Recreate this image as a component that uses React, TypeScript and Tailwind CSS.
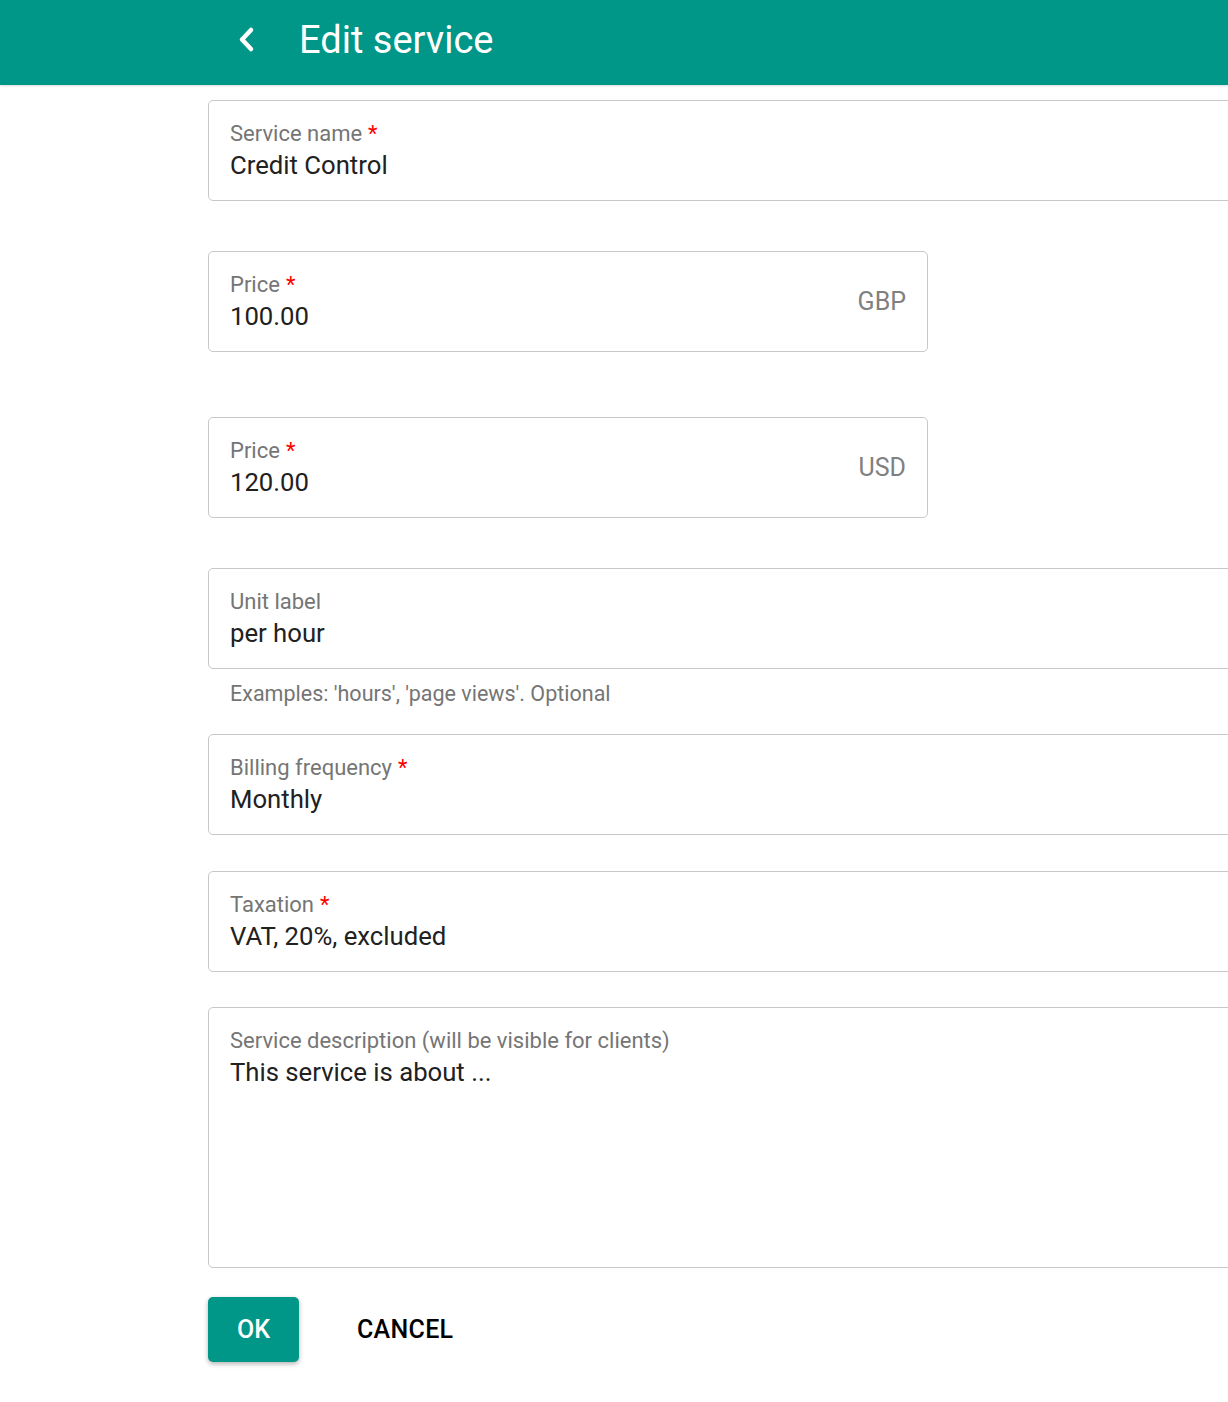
import React from "react";

type FieldProps = {
  label: string;
  value: string;
  required?: boolean;
  suffix?: string;
  narrow?: boolean;
};

const Field: React.FC<FieldProps> = ({ label, value, required, suffix, narrow }) => (
  <div
    className={`flex h-[101px] items-center rounded-[5px] border border-[#c8c8c8] bg-white pl-[21px] pr-[21px] ${
      narrow ? "w-[720px]" : "w-[1060px]"
    }`}
  >
    <div className="flex flex-1 flex-col">
      <div className="text-[22px] leading-[26px] text-[#757575]">
        {label}
        {required && <span className="ml-[6px] text-[#ff0000]">*</span>}
      </div>
      <div className="mt-[2px] text-[25.7px] leading-[32px] text-[#212121]">{value}</div>
    </div>
    {suffix && <div className="text-[25px] text-[#808080]">{suffix}</div>}
  </div>
);

export default function App() {
  return (
    <div className="min-h-[1402px] w-[1228px] overflow-hidden bg-white font-['Roboto',sans-serif]">
      {/* Top bar */}
      <div className="flex h-[85px] items-center bg-[#009688] pb-[6px] shadow-[0_1px_2px_rgba(0,0,0,0.15)]">
        <button className="ml-[234px] flex h-[30px] w-[24px] items-center justify-center">
          <svg width="20" height="28" viewBox="0 0 20 28">
            <polyline
              points="15,4 6,13.5 15,23"
              fill="none"
              stroke="#fff"
              strokeWidth="4.5"
              strokeLinecap="round"
              strokeLinejoin="round"
            />
          </svg>
        </button>
        <h1 className="ml-[41px] text-[38px] font-normal leading-none text-white">Edit service</h1>
      </div>

      {/* Form */}
      <div className="flex flex-col pl-[208px] pt-[15px]">
        <Field label="Service name" value="Credit Control" required />
        <div className="mt-[50px]">
          <Field label="Price" value="100.00" required suffix="GBP" narrow />
        </div>
        <div className="mt-[65px]">
          <Field label="Price" value="120.00" required suffix="USD" narrow />
        </div>
        <div className="mt-[50px]">
          <Field label="Unit label" value="per hour" />
        </div>
        <div className="h-[65px] pl-[22px] pt-[12px] text-[21.5px] leading-[26px] text-[#757575]">
          Examples: 'hours', 'page views'. Optional
        </div>
        <Field label="Billing frequency" value="Monthly" required />
        <div className="mt-[36px]">
          <Field label="Taxation" value="VAT, 20%, excluded" required />
        </div>
        <div className="mt-[35px] h-[261px] w-[1060px] rounded-[5px] border border-[#c8c8c8] pl-[21px] pt-[20px]">
          <div className="text-[22px] leading-[26px] text-[#757575]">
            Service description (will be visible for clients)
          </div>
          <div className="mt-[2px] text-[25.7px] leading-[32px] text-[#212121]">This service is about ...</div>
        </div>

        {/* Actions */}
        <div className="mt-[29px] flex items-center">
          <button className="h-[65px] w-[91px] rounded-[5px] bg-[#009688] text-[25px] font-medium text-white shadow-[0_2px_5px_rgba(0,0,0,0.3)]">
            OK
          </button>
          <button className="ml-[58px] text-[25px] font-medium tracking-[0.3px] text-black">CANCEL</button>
        </div>
      </div>
    </div>
  );
}
